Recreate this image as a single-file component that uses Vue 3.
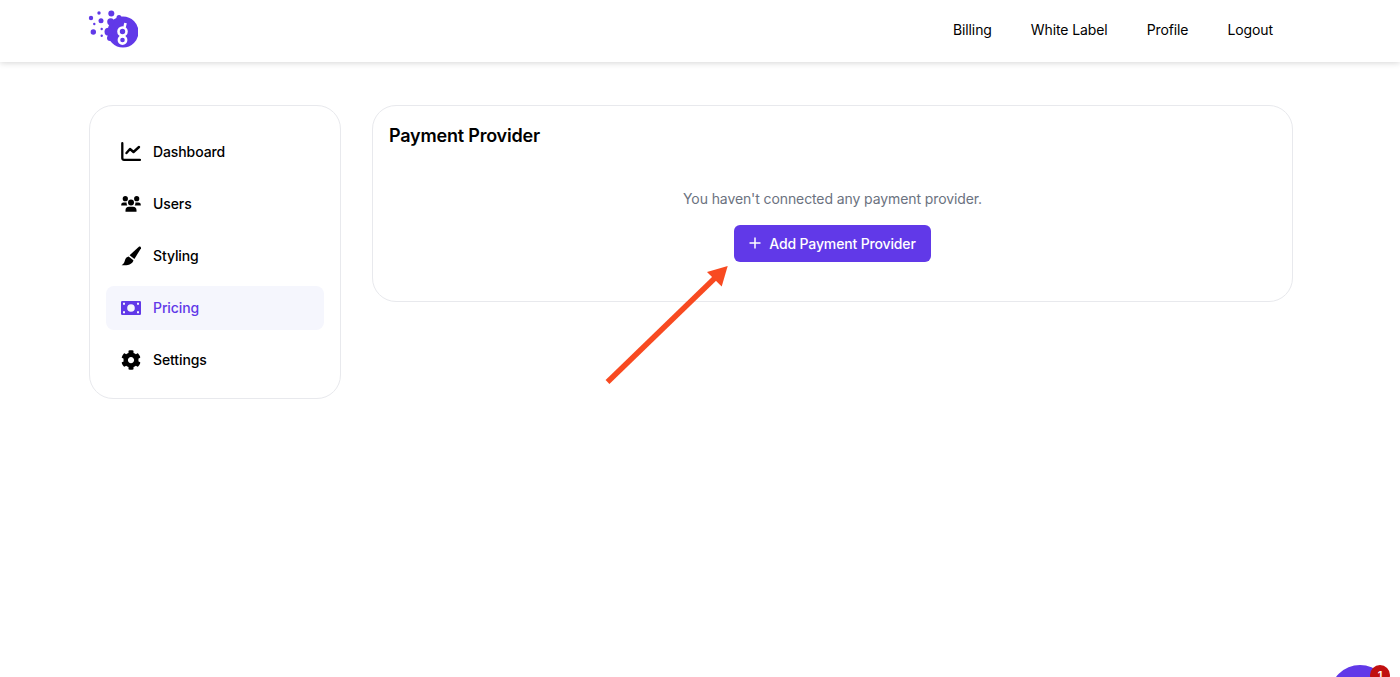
<script setup>
const links = ['Billing', 'White Label', 'Profile', 'Logout']
const items = [
  { name: 'Dashboard', icon: 'chart' },
  { name: 'Users', icon: 'users' },
  { name: 'Styling', icon: 'brush' },
  { name: 'Pricing', icon: 'money', active: true },
  { name: 'Settings', icon: 'cog' }
]
</script>

<template>
  <div class="page">
    <header class="header">
      <div class="header-in">
        <svg class="logo" width="50" height="40" viewBox="88 10 50 40" fill="#6139e8">
          <circle cx="123" cy="32" r="15.5" />
          <circle cx="111.3" cy="13.5" r="3" />
          <circle cx="99" cy="13" r="1.7" />
          <circle cx="91" cy="18" r="2.2" />
          <circle cx="101" cy="20.7" r="2.5" />
          <circle cx="94.3" cy="24" r="1.2" />
          <circle cx="93.3" cy="32" r="2.7" />
          <circle cx="101.7" cy="29" r="1.2" />
          <circle cx="101.7" cy="35.7" r="1.2" />
          <circle cx="119" cy="17.5" r="2.5" />
          <circle cx="110.7" cy="21.7" r="3.5" />
          <circle cx="108.5" cy="31.7" r="4" />
          <circle cx="110" cy="38" r="3" />
          <g fill="none" stroke="#fff" stroke-width="2.6">
            <circle cx="122.5" cy="31.5" r="4" />
            <circle cx="122.5" cy="40" r="3.6" />
            <path d="M124.5 27.5l1-4.5" />
          </g>
        </svg>
        <nav class="top-nav">
          <a v-for="l in links" :key="l">{{ l }}</a>
        </nav>
      </div>
    </header>

    <main class="content">
      <aside class="side card">
        <div v-for="it in items" :key="it.name" class="item" :class="{ active: it.active }">
          <span class="ico">
            <svg v-if="it.icon === 'chart'" width="20" height="20" viewBox="0 0 20 20" fill="none" stroke="currentColor" stroke-linecap="round" stroke-linejoin="round">
              <path d="M1.3 1.2V16.2a1.7 1.7 0 0 0 1.7 1.7H19" stroke-width="2.3" />
              <path d="M5.5 11L9 7l3.5 3L18 5" stroke-width="2.4" />
            </svg>
            <svg v-else-if="it.icon === 'users'" width="20" height="16" viewBox="0 0 20 16" fill="currentColor">
              <circle cx="4.3" cy="2.7" r="2.6" />
              <circle cx="15.7" cy="2.7" r="2.6" />
              <circle cx="10" cy="6.6" r="3" />
              <path d="M4.5 15.8v-1.6a3.5 3.5 0 0 1 3.5-3.5h4a3.5 3.5 0 0 1 3.5 3.5v1.6z" />
              <path d="M.2 9.6v-.9a2.2 2.2 0 0 1 2.2-2.2h3.2a4.4 4.4 0 0 0 .7 3.1z" />
              <path d="M19.8 9.6v-.9a2.2 2.2 0 0 0-2.2-2.2h-3.2a4.4 4.4 0 0 1-.7 3.1z" />
            </svg>
            <svg v-else-if="it.icon === 'brush'" width="20" height="20" viewBox="0 0 20 20" fill="currentColor">
              <path d="M20 2.2L13.4 13 8.6 9.2 17.6.9c1.2-1 3-.1 2.4 1.3z" />
              <path d="M7.6 10.4l4.8 3.8C12 17.4 8 20 .6 19.2c2.6-1.6 2.8-3.4 3.6-5.8.5-1.5 1.8-2.7 3.4-3z" />
            </svg>
            <svg v-else-if="it.icon === 'money'" width="20" height="14" viewBox="0 0 20 14" fill="currentColor">
              <path fill-rule="evenodd" d="M1.2 0h17.6A1.2 1.2 0 0 1 20 1.2v11.6a1.2 1.2 0 0 1-1.2 1.2H1.2A1.2 1.2 0 0 1 0 12.8V1.2A1.2 1.2 0 0 1 1.2 0zM10 3.2a3.8 3.8 0 1 0 0 7.6 3.8 3.8 0 0 0 0-7.6zM2 1.8v2h2v-2zM16 1.8v2h2v-2zM2 10.2v2h2v-2zM16 10.2v2h2v-2z" />
            </svg>
            <svg v-else width="20" height="20" viewBox="0 0 512 512" fill="currentColor">
              <path d="M487.4 315.7l-42.6-24.6c4.3-23.2 4.3-47 0-70.2l42.6-24.6c4.9-2.8 7.1-8.6 5.5-14-11.1-35.6-30-67.8-54.7-94.6-3.8-4.1-10-5.1-14.8-2.3L380.8 110c-17.9-15.4-38.5-27.3-60.8-35.1V25.8c0-5.6-3.9-10.5-9.4-11.7-36.7-8.2-74.3-7.8-109.2 0-5.5 1.2-9.4 6.1-9.4 11.7V75c-22.2 7.9-42.8 19.8-60.8 35.1L88.7 85.5c-4.9-2.8-11-1.9-14.8 2.3-24.7 26.7-43.6 58.9-54.7 94.6-1.7 5.4.6 11.2 5.5 14L67.3 221c-4.3 23.2-4.3 47 0 70.2l-42.6 24.6c-4.9 2.8-7.1 8.6-5.5 14 11.1 35.6 30 67.8 54.7 94.6 3.8 4.1 10 5.1 14.8 2.3l42.6-24.6c17.9 15.4 38.5 27.3 60.8 35.1v49.2c0 5.6 3.9 10.5 9.4 11.7 36.7 8.2 74.3 7.8 109.2 0 5.5-1.2 9.4-6.1 9.4-11.7v-49.2c22.2-7.9 42.8-19.8 60.8-35.1l42.6 24.6c4.9 2.8 11 1.9 14.8-2.3 24.7-26.7 43.6-58.9 54.7-94.6 1.5-5.5-.7-11.3-5.6-14.1zM256 336c-44.1 0-80-35.9-80-80s35.9-80 80-80 80 35.9 80 80-35.9 80-80 80z" />
            </svg>
          </span>
          <span class="label">{{ it.name }}</span>
        </div>
      </aside>

      <section class="main card">
        <h1>Payment Provider</h1>
        <div class="empty">
          <p>You haven't connected any payment provider.</p>
          <button class="btn">
            <svg width="12" height="12" viewBox="0 0 12 12" stroke="#fff" stroke-width="1.5" fill="none"><path d="M6 .5v11M.5 6h11" /></svg>
            <span>Add Payment Provider</span>
          </button>
        </div>
      </section>
    </main>

    <svg class="arrow" width="130" height="125" viewBox="600 262 130 125">
      <path d="M607.5 382L716 277" stroke="#f84a21" stroke-width="5.5" fill="none" />
      <path d="M727.7 266L707 272l14.7 14.5z" fill="#f84a21" />
    </svg>

    <div class="chat"></div>
    <div class="badge">1</div>
  </div>
</template>

<style>
html, body { margin: 0; height: 100%; overflow: hidden; background: #fff; }
</style>

<style scoped>
.page {
  position: relative;
  width: 1400px;
  height: 677px;
  overflow: hidden;
  background: #fff;
  font-family: Inter, "Liberation Sans", sans-serif;
  color: #000;
}
.header {
  height: 62px;
  background: #fff;
  box-shadow: 0 1px 6px rgba(0, 0, 0, 0.16);
}
.header-in {
  height: 100%;
  padding: 0 127px 0 88px;
  display: flex;
  align-items: center;
  justify-content: space-between;
}
.logo { display: block; margin-top: -2px; }
.top-nav {
  display: flex;
  gap: 39px;
  font-size: 14px;
  font-weight: 400;
  letter-spacing: -0.1px;
  margin-top: -3px;
}
.content {
  padding: 43px 107px 0 89px;
  display: flex;
  align-items: flex-start;
  gap: 31px;
}
.card {
  box-sizing: border-box;
  background: #fff;
  border: 1.5px solid #e8e9ed;
  border-radius: 24px;
}
.side {
  width: 252px;
  flex: none;
  padding: 24px 16px 16px;
  display: flex;
  flex-direction: column;
  gap: 8px;
}
.item {
  height: 44px;
  display: flex;
  align-items: center;
  gap: 12px;
  padding-left: 15px;
  border-radius: 8px;
  font-size: 14px;
  font-weight: 500;
  letter-spacing: -0.1px;
}
.label { padding-bottom: 2px; }
.item.active {
  background: #f5f6fd;
  color: #6139e8;
}
.ico {
  width: 20px;
  height: 20px;
  display: flex;
  align-items: center;
  justify-content: center;
}
.main {
  flex: 1;
  height: 197px;
  padding: 18px 16px;
}
h1 {
  margin: 0;
  font-size: 18px;
  line-height: 24px;
  font-weight: 600;
  letter-spacing: -0.2px;
}
.empty {
  display: flex;
  flex-direction: column;
  align-items: center;
  margin-top: 39px;
}
.empty p {
  margin: 0;
  font-size: 14px;
  line-height: 24px;
  color: #6b7280;
  letter-spacing: -0.1px;
}
.btn {
  margin-top: 13.5px;
  height: 37px;
  width: 197px;
  padding: 0;
  border: 0;
  border-radius: 6px;
  background: #6139e8;
  color: #fff;
  font: 500 14px Inter, "Liberation Sans", sans-serif;
  letter-spacing: -0.15px;
  display: flex;
  align-items: center;
  justify-content: center;
  gap: 8px;
}
.arrow {
  position: absolute;
  left: 600px;
  top: 262px;
}
.chat {
  position: absolute;
  left: 1330px;
  top: 665px;
  width: 60px;
  height: 60px;
  border-radius: 50%;
  background: #6139e8;
}
.badge {
  position: absolute;
  left: 1370px;
  top: 665px;
  width: 20px;
  height: 20px;
  border-radius: 50%;
  background: #c10f0f;
  color: #fff;
  font-size: 11px;
  font-weight: 600;
  line-height: 20px;
  text-align: center;
}
</style>
